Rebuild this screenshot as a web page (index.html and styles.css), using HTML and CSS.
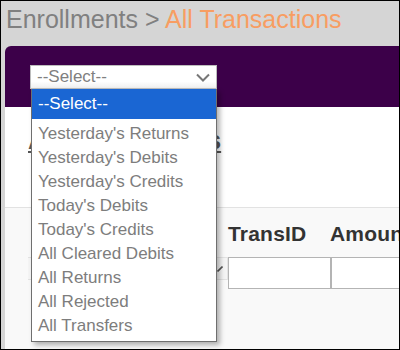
FILE: index.html
```html
<!DOCTYPE html>
<html>
<head>
<meta charset="utf-8">
<link rel="stylesheet" href="styles.css">
</head>
<body>
<div class="page">
  <h1 class="title"><span class="crumb">Enrollments &gt; </span><span class="current">All Transactions</span></h1>
  <div class="panel">
    <div class="select">
      <span class="select-text">--Select--</span>
      <svg class="chev" width="14" height="9" viewBox="0 0 14 9"><path d="M1 1.5 L7 7.5 L13 1.5" fill="none" stroke="#777" stroke-width="2"/></svg>
    </div>
  </div>
  <div class="content">
    <div class="top">
      <a class="heading">All Transactions</a>
    </div>
    <div class="grid-area">
      <div class="grid">
        <div class="th"></div>
        <div class="th">TransID</div>
        <div class="th">Amount</div>
        <div class="filter-select">
          <svg width="6" height="6" viewBox="0 0 6 6"><path d="M0.5 5.5 L5.5 0.5" stroke="#555" stroke-width="1.6"/></svg>
        </div>
        <div class="cell"></div>
        <div class="cell"></div>
      </div>
    </div>
  </div>
  <ul class="dropdown">
    <li class="opt active">--Select--</li>
    <li class="opt">Yesterday's Returns</li>
    <li class="opt">Yesterday's Debits</li>
    <li class="opt">Yesterday's Credits</li>
    <li class="opt">Today's Debits</li>
    <li class="opt">Today's Credits</li>
    <li class="opt">All Cleared Debits</li>
    <li class="opt">All Returns</li>
    <li class="opt">All Rejected</li>
    <li class="opt">All Transfers</li>
  </ul>
</div>
</body>
</html>
```

FILE: styles.css
```css
* { box-sizing: border-box; }
html, body { margin: 0; padding: 0; }
body {
  width: 400px;
  height: 350px;
  overflow: hidden;
  font-family: "Liberation Sans", Arial, sans-serif;
}
.page {
  position: relative;
  width: 400px;
  height: 350px;
  border: 1px solid #000;
  background: #d5d5d5;
  display: flex;
  flex-direction: column;
  overflow: hidden;
}
.title {
  margin: 0;
  height: 45px;
  padding: 4px 0 0 5px;
  font-size: 25px;
  font-weight: normal;
  line-height: 29px;
  white-space: nowrap;
}
.crumb { color: #808080; }
.current { color: #f89d62; }
.panel {
  margin-left: 4px;
  height: 61px;
  background: #3c0049;
  border-top-left-radius: 6px;
  padding: 19px 0 0 25px;
}
.select {
  width: 187px;
  height: 24px;
  background: linear-gradient(#ffffff 70%, #f0f0f0);
  border: 1px solid #bdbdbd;
  display: flex;
  align-items: center;
  justify-content: space-between;
  padding: 0 6px 0 6px;
}
.select-text {
  color: #808080;
  font-size: 17px;
}
.chev { margin-top: 1px; }
.content {
  margin-left: 4px;
  flex: 1;
  background: #fff;
  display: flex;
  flex-direction: column;
}
.top {
  height: 100px;
  padding: 19px 0 0 23px;
}
.heading {
  color: #555;
  font-weight: bold;
  font-size: 25px;
  line-height: 29px;
  text-decoration: underline;
  white-space: nowrap;
}
.grid-area {
  flex: 1;
  background: #f9f9f9;
  border-top: 1px solid #e2e2e2;
  padding: 14px 0 0 23px;
}
.grid {
  display: grid;
  grid-template-columns: 200px 102px 110px;
  row-gap: 11px;
}
.th {
  font-weight: bold;
  font-size: 21px;
  line-height: 24px;
  color: #333;
  letter-spacing: 0.2px;
  white-space: nowrap;
}
.filter-select {
  height: 23px;
  border: 1px solid #e3e3e3;
  border-left: none;
  background: #f5f5f5;
  display: flex;
  align-items: center;
  justify-content: flex-end;
  padding-right: 4px;
}
.cell {
  height: 32px;
  background: #fff;
  border: 1px solid #b4b4b4;
  border-right-width: 0;
}
.cell + .cell { border-left-width: 2px; }
.dropdown {
  position: absolute;
  left: 30px;
  top: 88px;
  width: 186px;
  margin: 0;
  padding: 0 0 3px 0;
  list-style: none;
  background: #fff;
  border: 1px solid #6f6f6f;
  border-top: none;
  box-shadow: 3px 3px 5px rgba(0,0,0,0.3);
}
.opt {
  font-size: 17px;
  color: #7d7d7d;
  line-height: 24px;
  height: 24px;
  padding-left: 6px;
  white-space: nowrap;
}
.opt.active {
  background: #1a66d3;
  color: #fff;
  height: 30px;
  line-height: 30px;
  margin-bottom: 3px;
}
```
